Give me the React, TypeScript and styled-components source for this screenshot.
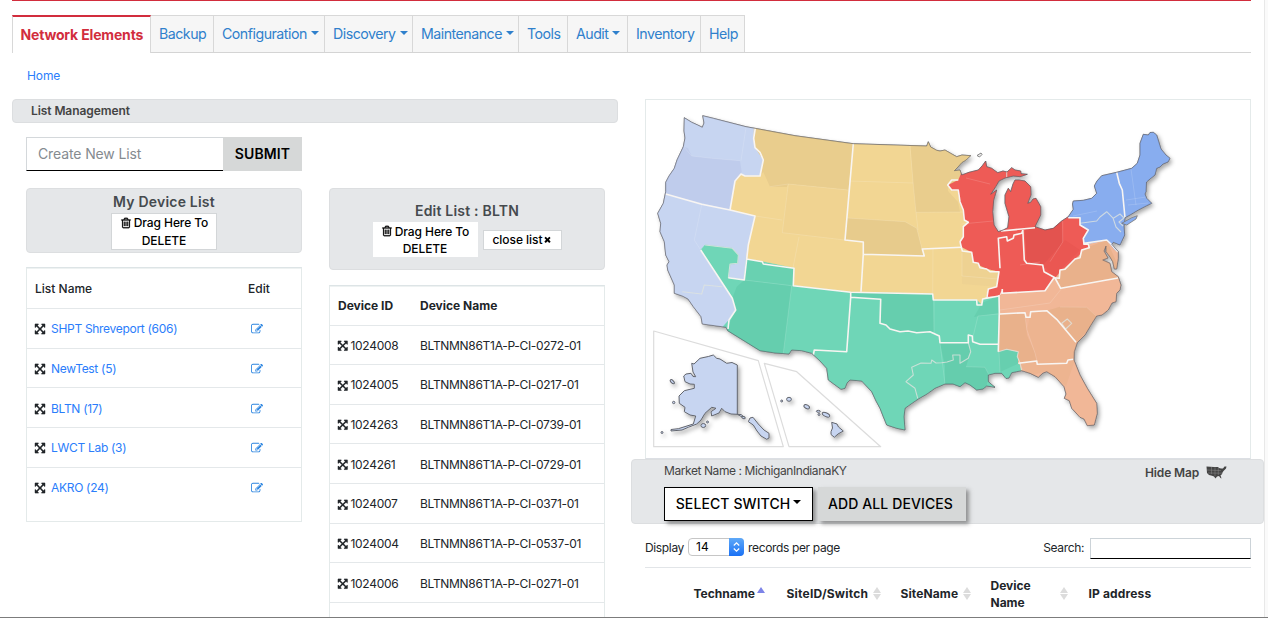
import React from "react";
import styled, { createGlobalStyle, css } from "styled-components";

const Global = createGlobalStyle`
  * { box-sizing: border-box; }
  html, body { margin: 0; padding: 0; background: #fff; overflow: hidden; }
  body { font-family: Inter, "Liberation Sans", sans-serif; font-size: 13px; color: #212529; line-height: 16px; }
  button, input { font-family: inherit; margin: 0; border-radius: 0; }
`;

/* ---------- icons ---------- */

const PATHS = {
  move: "M1411 541l-355 355 355 355 144-144q29-31 70-14 39 17 39 59v448q0 26-19 45t-45 19h-448q-42 0-59-40-17-39 14-69l144-144-355-355-355 355 144 144q31 30 14 69-17 40-59 40h-448q-26 0-45-19t-19-45v-448q0-42 40-59 39-17 69 14l144 144 355-355-355-355-144 144q-19 19-45 19-12 0-24-5-40-17-40-59v-448q0-26 19-45t45-19h448q42 0 59 40 17 39-14 69l-144 144 355 355 355-355-144-144q-31-30-14-69 17-40 59-40h448q26 0 45 19t19 45v448q0 42-39 59-13 5-25 5-26 0-45-19z",
  edit: "M888 1184l116-116-152-152-116 116v56h96v96h56zm440-720q-16-16-33 1l-350 350q-17 17-1 33t33-1l350-350q17-17 1-33zm80 594v190q0 119-84.5 203.5t-203.5 84.5h-832q-119 0-203.5-84.5t-84.5-203.5v-832q0-119 84.5-203.5t203.5-84.5h832q63 0 117 25 15 7 18 23 3 17-9 29l-49 49q-14 14-32 8-23-6-45-6h-832q-66 0-113 47t-47 113v832q0 66 47 113t113 47h832q66 0 113-47t47-113v-126q0-13 9-22l64-64q15-15 35-7t20 29zm-96-738l288 288-672 672h-288v-288zm444 132l-92 92-288-288 92-92q28-28 68-28t68 28l152 152q28 28 28 68t-28 68z",
  trash: "M704 736v576q0 14-9 23t-23 9h-64q-14 0-23-9t-9-23v-576q0-14 9-23t23-9h64q14 0 23 9t9 23zm256 0v576q0 14-9 23t-23 9h-64q-14 0-23-9t-9-23v-576q0-14 9-23t23-9h64q14 0 23 9t9 23zm256 0v576q0 14-9 23t-23 9h-64q-14 0-23-9t-9-23v-576q0-14 9-23t23-9h64q14 0 23 9t9 23zm128 724v-948h-896v948q0 22 7 40.5t14.5 27 10.5 8.5h832q3 0 10.5-8.5t14.5-27 7-40.5zm-672-1076h448l-48-117q-7-9-17-11h-317q-10 2-17 11zm928 32v64q0 14-9 23t-23 9h-96v948q0 83-47 143.5t-113 60.5h-832q-66 0-113-58.5t-47-141.5v-952h-96q-14 0-23-9t-9-23v-64q0-14 9-23t23-9h309l70-167q15-37 54-63t79-26h320q40 0 79 26t54 63l70 167h309q14 0 23 9t9 23z",
  times: "M1490 1322q0 40-28 68l-136 136q-28 28-68 28t-68-28l-294-294-294 294q-28 28-68 28t-68-28l-136-136q-28-28-28-68t28-68l294-294-294-294q-28-28-28-68t28-68l136-136q28-28 68-28t68 28l294 294 294-294q28-28 68-28t68 28l136 136q28 28 28 68t-28 68l-294 294 294 294q28 28 28 68z",
};

const Svg = styled.svg`
  display: inline-block;
  flex: none;
  fill: currentColor;
`;

function Icon({ name, size, weight = 0 }: { name: keyof typeof PATHS; size: number; weight?: number }) {
  return (
    <Svg width={size} height={size} viewBox="0 0 1792 1792" stroke="currentColor" strokeWidth={weight}>
      <path d={PATHS[name]} />
    </Svg>
  );
}

const Caret = styled.i<{ $gap?: number }>`
  display: inline-block;
  flex: none;
  margin: 0 0 2px ${(p) => p.$gap ?? 4}px;
  border: 4px solid transparent;
  border-top-color: currentColor;
  border-bottom: 0;
`;

/* ---------- page frame ---------- */

const Page = styled.div`
  width: 1268px;
  height: 618px;
  display: flex;
  border-bottom: 1px solid #7c7c7c;
  overflow: hidden;
`;

const Content = styled.div`
  width: 1264px;
  flex: none;
  padding-left: 12px;
`;

const Gutter = styled.div`
  flex: 1;
  background: #fafafa;
  border-left: 1px solid #e8e8e8;
`;

const TopRule = styled.div`
  width: 1239px;
  height: 1px;
  background: #d22d3d;
`;

const Tabs = styled.nav`
  width: 1239px;
  height: 38px;
  margin-top: 14px;
  display: flex;
  border-bottom: 1px solid #d4d4d4;
`;

const Tab = styled.a<{ $w: number; $active?: boolean }>`
  width: ${(p) => p.$w}px;
  height: 37px;
  flex: none;
  display: flex;
  align-items: center;
  padding: 0 0 1px 8px;
  font-size: 14px;
  letter-spacing: -0.5px;
  font-size: 14.2px;
  white-space: nowrap;
  color: #2f80cc;
  background: #f6f6f6;
  border: 1px solid #d8d8d8;
  border-left-width: 0;
  border-bottom: 0;
  ${(p) =>
    p.$active &&
    css`
      height: 38px;
      background: #fff;
      color: #d22d3d;
      font-size: 14px;
      font-weight: 700;
      letter-spacing: -0.17px;
      padding-left: 7.5px;
      border-top: 2px solid #d22d3d;
      border-left-width: 1px;
      border-right-width: 1px;
    `}
`;

const Crumb = styled.a`
  display: block;
  margin: 15px 0 15px 15px;
  font-size: 12px;
  line-height: 16px;
  letter-spacing: -0.1px;
  color: #2a7dfb;
`;

const Columns = styled.main`
  display: flex;
  justify-content: space-between;
  align-items: flex-start;
`;

const panel = css`
  background: #e5e7e9;
  border: 1px solid #dcdee0;
  border-radius: 4px;
`;

/* ---------- list management ---------- */

const ListArea = styled.section`
  width: 606px;
`;

const SectionTitle = styled.h2`
  ${panel}
  height: 24px;
  margin: 0;
  padding-left: 18px;
  font-size: 12px;
  line-height: 22px;
  font-weight: 600;
  letter-spacing: -0.08px;
  color: #444;
`;

const ListColumns = styled.div`
  display: flex;
  gap: 27px;
  padding: 14px 0 0 14px;
`;

const Column = styled.div<{ $top?: number }>`
  width: 276px;
  padding-top: ${(p) => p.$top ?? 0}px;
`;

const CreateForm = styled.form`
  display: flex;
  height: 34px;
`;

const NameInput = styled.input`
  width: 197px;
  padding: 0 0 2px 11px;
  border: 1px solid #d4d8db;
  border-right: 0;
  border-bottom-color: #000;
  font-size: 14px;
  letter-spacing: -0.12px;
  outline: 0;
  &::placeholder { color: #858b90; opacity: 1; }
`;

const SubmitButton = styled.button`
  flex: 1;
  height: 34px;
  border: 0;
  padding: 0 0 1px;
  background: #d6d8d8;
  font-size: 14px;
  font-weight: 600;
  letter-spacing: 0.1px;
  color: #000;
`;

const ToolPanel = styled.div<{ $h: number; $pad: number }>`
  ${panel}
  height: ${(p) => p.$h}px;
  padding-top: ${(p) => p.$pad}px;
  display: flex;
  flex-direction: column;
  align-items: center;
`;

const PanelTitle = styled.h3`
  margin: -1px 0 1px;
  font-size: 14px;
  line-height: 20px;
  font-weight: 600;
  letter-spacing: 0.2px;
  color: #454a4e;
`;

const ButtonRow = styled.div`
  display: flex;
  align-items: center;
  gap: 5px;
`;

const DropButton = styled.button<{ $h: number; $line: number; $bordered?: boolean }>`
  width: ${(p) => (p.$bordered ? 106 : 105)}px;
  height: ${(p) => p.$h}px;
  padding: 0;
  background: #fff;
  border: ${(p) => (p.$bordered ? "1px solid #d3d6d8" : "0")};
  display: flex;
  flex-direction: column;
  align-items: center;
  justify-content: center;
  font-size: 12px;
  font-weight: 500;
  letter-spacing: -0.08px;
  line-height: ${(p) => p.$line}px;
  color: #000;
`;

const IconLine = styled.span`
  display: flex;
  align-items: center;
  gap: 2px;
`;

const CloseButton = styled.button`
  width: 79px;
  height: 20px;
  padding: 0;
  display: flex;
  align-items: center;
  justify-content: center;
  background: #fff;
  border: 1px solid #d3d6d8;
  font-size: 12px;
  font-weight: 500;
  letter-spacing: -0.05px;
  line-height: 16px;
  color: #000;
`;

const Grid = styled.div<{ $h: number; $gap: number }>`
  margin-top: ${(p) => p.$gap}px;
  height: ${(p) => p.$h}px;
  border: 1px solid #e4eaea;
  border-top-color: #dde4e6;
  box-shadow: inset 0 1px 0 #eef2f2;
`;

const GridRow = styled.div<{ $cols: string; $h?: number; $weight?: number; $last?: boolean }>`
  display: grid;
  grid-template-columns: ${(p) => p.$cols};
  align-items: center;
  height: ${(p) => p.$h ?? 39.67}px;
  padding: 2px 0 0 7px;
  border-bottom: ${(p) => (p.$last ? 0 : 1)}px solid #e4e8ea;
  font-size: 12px;
  font-weight: ${(p) => p.$weight ?? 400};
  letter-spacing: ${(p) => (p.$weight ? 0 : -0.3)}px;
  white-space: nowrap;
`;

const Cell = styled.span<{ $gap?: number; $pad?: number }>`
  display: flex;
  align-items: center;
  gap: ${(p) => p.$gap ?? 0}px;
  padding-left: ${(p) => p.$pad ?? 0}px;
`;

const ListLink = styled.a`
  color: #2a7dfb;
`;

const EditLink = styled.a`
  display: flex;
  padding-left: 3px;
  color: #2b84e0;
`;

/* ---------- map side ---------- */

const MapArea = styled.section`
  width: 633px;
`;

const MapFrame = styled.div`
  width: 606px;
  height: 360px;
  margin-left: 14px;
  border: 1px solid #e4eaea;
  border-bottom-color: #dcdfe4;
  svg { display: block; margin: -1px; }
`;

const MarketPanel = styled.div`
  ${panel}
  height: 65px;
  padding: 3px 36px 0 32px;
`;

const MarketHead = styled.div`
  display: flex;
  justify-content: space-between;
  height: 24px;
  font-size: 12px;
  line-height: 15px;
  letter-spacing: -0.42px;
  color: #444;
`;

const HideMap = styled.a`
  display: flex;
  align-items: center;
  gap: 7px;
  height: 18px;
  font-weight: 600;
  letter-spacing: -0.15px;
`;

const MarketActions = styled.div`
  display: flex;
  gap: 5px;
`;

const ActionButton = styled.button<{ $w: number; $primary?: boolean }>`
  width: ${(p) => p.$w}px;
  height: 34px;
  padding: 0 ${(p) => (p.$primary ? 0 : 3)}px 2px 0;
  display: flex;
  align-items: center;
  justify-content: center;
  font-size: 14px;
  font-weight: 500;
  letter-spacing: 0.1px;
  white-space: nowrap;
  color: #000;
  background: ${(p) => (p.$primary ? "#fff" : "#d6d8d8")};
  border: ${(p) => (p.$primary ? "1px solid #000" : "0")};
  box-shadow: 3px 3px 4px rgba(60, 60, 60, 0.5);
`;

const Controls = styled.div`
  display: flex;
  justify-content: space-between;
  width: 606px;
  height: 44px;
  margin-left: 14px;
  padding-top: 14px;
  border-bottom: 1px solid #e2e5e8;
  font-size: 12px;
  letter-spacing: -0.35px;
`;

const Control = styled.label<{ $gap: number }>`
  display: flex;
  align-items: center;
  gap: ${(p) => p.$gap}px;
  height: 20px;
`;

const Select = styled.span`
  width: 56px;
  height: 18px;
  display: flex;
  align-items: center;
  justify-content: space-between;
  padding-left: 7px;
  letter-spacing: 0;
  border: 1px solid #c6c6c6;
  border-radius: 4px;
  color: #000;
  margin: -1px 0 1px;
`;

const Stepper = styled.span`
  width: 15px;
  height: 18px;
  margin-right: -1px;
  display: flex;
  align-items: center;
  justify-content: center;
  border-radius: 0 4px 4px 0;
  background: linear-gradient(#5fa9f8, #1a71f5);
`;

const SearchInput = styled.input`
  width: 161px;
  height: 21px;
  border: 1px solid #ccd3d8;
  border-bottom-color: #000;
  outline: 0;
`;

const TableHead = styled.div`
  display: grid;
  grid-template-columns: 93px 114px 90px 98px 1fr;
  align-items: center;
  width: 606px;
  height: 51px;
  margin-left: 14px;
  padding-left: 48.5px;
  font-size: 12px;
  font-weight: 700;
  line-height: 17px;
  letter-spacing: 0.08px;
`;

const HeadCell = styled.span<{ $right?: number; $track?: number }>`
  display: flex;
  align-items: center;
  justify-content: space-between;
  padding-right: ${(p) => p.$right ?? 0}px;
  letter-spacing: ${(p) => p.$track ?? 0}px;
`;

const Up = styled.i<{ $on?: boolean }>`
  width: 0;
  border: 4px solid transparent;
  border-top: 0;
  border-bottom: ${(p) => (p.$on ? "6px solid #7d84e8" : "6px solid #dcdcdc")};
`;

const Down = styled.i`
  width: 0;
  border: 4px solid transparent;
  border-bottom: 0;
  border-top: 6px solid #dcdcdc;
`;

const SortBox = styled.span<{ $on?: boolean }>`
  display: flex;
  flex-direction: column;
  gap: 1px;
  padding-bottom: ${(p) => (p.$on ? 7 : 0)}px;
`;

function Sort({ on }: { on?: boolean }) {
  return (
    <SortBox $on={on}>
      <Up $on={on} />
      {!on && <Down />}
    </SortBox>
  );
}

/* ---------- market map ---------- */

const COUNTRY =
  "M684.3 117.7L691.7 122.3 697.7 125 702.3 127.3 704 123 702.7 115.7 713.3 118.3 746 126.7 755 128.3 795 135.7 853.3 143.7 926.7 146 928.3 141.7 930.7 147 936.7 150.3 940 151 945 150 951 153.5 956.7 156.7 962 155 970.7 155.7 966 160 961.7 162.7 958 167 954.3 170.7 960 170 961.7 175 969 172.3 978.3 170 982.3 165.7 985.7 161 986.7 166.7 991.7 168.3 997.7 172.7 1003 171 1007 172 1011.7 167.7 1015 170 1020.7 171 1021 173.7 1027.3 174.3 1020 176.7 1013.3 176 1005 178 999 181 995.7 186.7 990.7 194.3 996.7 190 993.7 200 992.7 211.7 994 225 998.3 231.7 1003.3 230 1007.7 227.7 1009 216.7 1005 203.3 1005 195 1008.3 188.3 1010.7 191.7 1013 184 1015 180 1019 180 1025 181 1030.7 186.7 1031 195 1027.7 203.3 1030.7 202.3 1033 199 1036 198.3 1040.7 206.7 1040.7 215 1035 226.7 1045 230 1053.3 228.3 1061.7 221 1068.3 216.7 1073.3 209.3 1072.5 204 1073.3 201 1083.3 200.3 1091.7 198.3 1096.7 193.3 1094.3 186 1097 181 1101.7 175.7 1116.7 172.3 1131.7 168.3 1137.3 163.3 1140 155 1140 143.3 1143.3 134.3 1148.3 135 1150 132.5 1153.3 132.3 1156.7 135 1161 149 1166 155 1170 158.3 1168 162 1163 164 1160 167 1156.7 168.3 1155 175 1150 179 1146.5 182 1146 191.7 1145 194 1146.7 198.3 1151.7 203.3 1146.7 205.7 1138.3 210 1130 215 1125 217.7 1124 226.7 1124.7 235 1120 245 1113.3 242.3 1111.7 244.3 1118.3 251.7 1118.3 258.3 1116.7 269 1114.3 269 1112.7 261.7 1110 257 1106 251.7 1106 246 1104 251 1108 258 1102.7 260 1110 263.3 1111.7 271.7 1118.3 276.7 1121 285 1120 290 1116.7 293.3 1116 301.7 1112 303 1108.3 310 1102 315 1096.7 316 1092 323.3 1085 335 1077.3 342.7 1074.3 351.7 1074 360 1080 375 1087.3 388.3 1096.7 403.3 1097.3 413.3 1094.3 425 1087.3 425.7 1084 419 1080 417.3 1071.7 408.3 1069.3 400.7 1064.3 398.3 1066 394 1064 386.7 1055 376.7 1046.7 371.7 1043 373 1038.3 377.3 1030 373.3 1021.7 370.7 1011.7 372.7 1009 378 1006 378.5 1001.7 373.3 995 373.3 988.3 375 988.3 381.7 995 387.3 986.7 386 983 389 976.7 390 970 385 965 382.7 960 386.7 953 384 945 384 935 388.3 927 394 918.3 399 911 404 905 408.3 904 416.7 905 430 896.7 428.3 886.7 425 883 416 880 408.3 876 401 871.7 391.7 861.7 381 850 380 847 383 845 388.3 841 389.3 828.3 380 826.7 368.3 820 361 811.7 353.3 801.7 350.7 791.7 350 789 354 775 353 760 350.7 727.7 330.7 726 327.3 702.3 324 701 316.7 693.3 306.7 688 299 682.3 296 674.3 293.3 674.3 285 667.7 270 667 265 669 261.7 665.7 255 664.3 241.7 660 231.7 660.7 223.3 657.7 213.3 663.3 203.3 665.7 191.7 665.7 182.3 669 176 674.3 168.3 677 160 683.3 146.7 685 138 684 131Z";

const REGIONS: [string, string][] = [
  ["#c7d5f1", "M640 100L755.3 100 755.3 128.3 753.7 138.3 755 147.7 760 152.3 763.3 160 760 176 745 176 741 174 735 181 730 210 755 216 748.3 245 744.3 280 728.3 277.7 730 264 737.7 263.3 738.3 255 732.3 248.3 705 245 700.7 250 732.3 298.3 735.7 310 729 320 726 335 640 340Z"],
  ["#f2d693", "M755.3 110L990 110 985 158 962 171 958.3 180 951.7 180 947.7 185 951.7 190 958.3 190 960 201.7 963.3 210 964.3 220 968.3 222.3 963.3 226.7 963.3 236.7 960 241.7 962.3 251 971.7 252.3 973.3 262.3 978.3 263.3 980 267.7 986.7 269 999 271.7 996.7 286.7 988.3 289 986.7 296.7 982.7 299 981.7 305 977 304 976.7 300 933.3 300 932.7 294 850.7 292.3 793.3 285.7 794 268.3 762.3 261.7 746.3 259 748.3 245 755 216 730 210 735 181 741 174 745 176 760 176 763.3 160 760 152.3 755 147.7 753.7 138.3Z"],
  ["#6fd6b7", "M705 245L732.3 248.3 738.3 255 737.7 263.3 730 264 728.3 277.7 744.3 280 746.3 259 762.3 261.7 794 268.3 793.3 285.7 850.7 292.3 932.7 294 933.3 300 976.7 300 981.7 305 982.7 299 999 296 999.3 313 998.3 351.7 1006.7 349.3 1018.3 351.7 1017.3 356.7 1020 362.7 1022 375 1000 440 740 440 720 330 729 320 735.7 310 732.3 298.3 700.7 250Z"],
  ["#ee5b56", "M962 171L975 165 990 155 1045 165 1045 226 1070 210 1068.3 217.7 1080 217.7 1080 225 1088.3 230 1083.3 238.3 1084 244.3 1088.3 244.3 1089.3 247.7 1081.7 250 1080 257.7 1075 259 1065 269.3 1060 270 1059.3 278.3 1054 277.7 1045 290.7 1002.3 293.3 1002 289 999 296 986.7 296.7 988.3 289 996.7 286.7 999 271.7 986.7 269 980 267.7 978.3 263.3 973.3 262.3 971.7 252.3 962.3 251 960 241.7 963.3 236.7 963.3 226.7 968.3 222.3 964.3 220 963.3 210 960 201.7 958.3 190 951.7 190 947.7 185 951.7 180 958.3 180Z"],
  ["#f1b797", "M999 296L1002.3 293.3 1045 290.7 1054 277.7 1059.3 278.3 1060 270 1065 269.3 1075 259 1080 257.7 1081.7 250 1089.3 247.7 1088.3 244.3 1106.7 240 1110 243.3 1115 250 1130 252 1130 300 1100 440 1022 375 1020 362.7 1017.3 356.7 1018.3 351.7 1006.7 349.3 998.3 351.7 999.3 313Z"],
  ["#88adef", "M1068.3 217.7L1073 190 1140 125 1180 125 1180 200 1125 252 1115 250 1106.7 240 1084 244.3 1083.3 238.3 1088.3 230 1080 225 1080 217.7Z"],
];

const TINTS: [string, string][] = [
  ["#bfccec", "M683.3 146.7L688 148 691.7 156 711.7 158.3 740 160.7 741.7 171.7 735 181 730 210 665.7 194 660 180Z"],
  ["#e9cd8d", "M755.3 128.3L853.3 143.7 848.3 190 788.3 184 786.7 187 770 186.7 763.3 172 760 176 763.3 160 755 147.7 753.7 138.3Z"],
  ["#f0d391", "M788.3 184L848.3 190 845 240 782.3 232.7Z"],
  ["#e9cd8d", "M910 140L932 140 975 155 953 170 962 171 958 180 948 185 948 191 958 202 960 212 916 212.3 913.3 185Z"],
  ["#e7cb8c", "M846.7 218L905 221.7 916.7 228.3 921.7 248.3 924.3 256 863.3 254.3 863.3 242 845 240Z"],
  ["#eed292", "M961.7 247.3L971.7 252.3 973.3 262.3 986.7 269 999 271.7 996.7 286.7 962 284Z"],
  ["#65ceae", "M744.3 280L791.7 285.7 783.3 353.3 760 352 726 331 735.7 310 732.3 298.3 736.7 286.7Z"],
  ["#69d1b1", "M746.3 259L794 268.3 793.3 285.7 744.3 280Z"],
  ["#66ceae", "M850.7 292.3L932.7 294 934 333 916.7 332.7 900 331.7 880 323.3 880.7 299.3 850.7 297.3Z"],
  ["#67cfaf", "M982 303L998.8 296 998.8 313 974 317Z"],
  ["#65cdad", "M940 343L968.3 342.7 970.7 351.7 966 366.7 985 367.3 989 375 985 392 945 390 945 366Z"],
  ["#67cfaf", "M999 351L1006.7 349.3 1018.3 351.7 1017.3 356.7 1020 362.7 1000 372Z"],
  ["#e3534f", "M1024.7 228.3L1035 227.7 1045 230 1061.7 221 1062.7 241.7 1050 261.7 1042.7 265 1026.7 263.3Z"],
  ["#ea5752", "M1043 265L1065 240 1080 250 1060 270 1055 278Z"],
  ["#e9b18b", "M1088.3 247L1106.7 240 1120 270 1118 278 1060.7 288.3 1055 278 1062 270 1076 258Z"],
  ["#e9b18b", "M1000 314L1025 314 1027 335 1035 353 1036.7 361 1018 363 1018 351.7 1006.7 349.3 998.3 351.7Z"],
  ["#e9b18b", "M1046.7 310.7L1060 306.7 1086.7 307.3 1096.7 316 1092 325 1077 342.7 1056.7 319.3Z"],
  ["#edb490", "M1018 363L1075 360 1066 386 1046 371 1030 376Z"],
  ["#edb490", "M1030.7 312L1046.7 310.7 1056.7 319.3 1076 342.7 1074 360 1037 363 1035 353 1027 330Z"],
];

const FAINT = [
  "M746 127.3L741 160.7M684 147L691.7 156 711.7 158.3 740 160.7",
  "M701.7 205L694.3 240 700.7 250",
  "M770 186.7L788.3 184 848.3 190M788.3 184L782.3 232.7 845 240M755 216L782 220M799 237L793 268M910 146L913.3 185 916 212.3 918 230M849 181L913.3 183M847 218L905 221.7 916.7 228.3 922 249M916 212.3L962 212M933 249L932.7 294M962 253V276L998 279",
  "M791.7 285.7L783.3 353.3M744.3 280L791.7 285.7M934 301V333M940 343L945 384M978 316L998 314M978 316L972 341M966 366.7L985 367.3 989 375M999 352L1000 372",
  "M961.7 224L993 221M1062.7 221V242L1050 261.7M1020 265L1040 262M966 178L990 184",
  "M1025 317L1027 330 1035 353 1037 361M1060 307L1086.7 307.3 1096 316M1000 310L1050 303 1062 288",
  "M1131 169L1136 205M1126 200L1146 197M1073 216L1097 211M1128 205L1148 203",
];

const BORDERS = [
  "M755.3 128.3L753.7 138.3 755 147.7 760 152.3 763.3 160 760 176 745 176 741 174 735 181 730 210",
  "M665.7 194L701.7 204.3 730 210 755 216 748.3 245 744.3 280 728.3 277.7 M700.7 250L732.3 298.3 735.7 310 729 320 728 329",
  "M746.3 259L762.3 261.7 763.3 264 794 268.3 793.3 285.7 850.7 292.3 932.7 294 933.3 300 976.7 300 977 305 981.7 305 982.7 299 999 296",
  "M853.3 143.7L845 240 863.3 242 863.3 254.3 924.3 256 922.3 249 961.7 247.3M863.3 254.3L861 291.7",
  "M958.3 180L951.7 180 947.7 185 951.7 190 958.3 190 960 201.7 963.3 210 964.3 220 968.3 222.3 963.3 226.7 963.3 236.7 960 241.7 962.3 251 971.7 252.3 973.3 262.3 978.3 263.3 980 267.7 986.7 269 990 271.7 999 271.7 996.7 286.7 988.3 289 987 297",
  "M850.7 292.3L850.7 297.3 846.7 351.7 814.3 350 813.3 355M850.7 297.3L880.7 299.3 880 323.3 886 325 890 329 900 331.7 908 331 916.7 332.7 930 331.7 939.3 336 940 342.7 968.3 342.7 968.3 335 972.3 336 972.7 341.7 980 344.3 998.3 344.3",
  "M999 295L999.3 313 998.3 351.7",
  "M1000 268.3L998.3 238.3 1006.7 236.7 1007.3 241 1013.3 238.3 1014 235 1021.7 233.3 1023.3 229M1001 231L1035 227.7M1022.7 228.3L1024.3 260 1026.7 263.3 1042.7 265 1044 271.7 1055 277.7",
  "M1002.3 289V293.3L1045 290.7 1054 277.7 1059.3 278.3 1060 270 1065 269.3 1075 259 1080 257.7 1081.7 250 1089.3 247.7 1088.3 244.3 1084 244.3 1083.3 238.3 1088.3 230 1080 225 1080 217.7 1068.3 217.7M1084 243.3L1106.7 240 1111 244 1118 252",
  "M1055 278L1060.7 288.3 1118 278M1000 314L1025 312.7 1026 317.3H1030L1030.7 311.7 1046.7 310.7 1056.7 319.3 1076 342.3M1018.3 363.3L1036.7 361 1037.3 364.3 1066.7 363.3 1068 360 1073.3 359.3",
  "M1116.7 172.3L1119.3 183.3 1122.3 190 1125 217.7",
];

const SUB_BORDERS =
  "M705 245L732.3 248.3 738.3 255 737.7 263.3 730 264 728.3 277.7M682.3 291.7L701.7 294 704.3 285 722.3 286.7M1006.7 171V177M968.3 342.7L970.7 351.7 968.3 358.3 960 363.3 960 355 952.7 355 953.3 360 947 362 941.7 362.7 936 363 931.7 360 931 363.3 921 363 911.7 367.3 913.3 375 906 381.7 915 388.3 917.7 398.3M1080 223.3L1096.7 221 1100 217 1106.7 211.7 1113.3 218.3 1120 214 1124 218 1119 222 1123 226M1113 218L1116 227 1121 232M1061.7 323.3L1067.3 319 1071.7 323.3 1065.7 329ZM998.3 351.7L1006.7 349.3 1018.3 351.7 1017.3 356.7 1020 362.7 1021.7 370";

const ALASKA =
  "M713.3 355L716.7 358.3 720 359 726.7 363.3 732 362.5 737.3 365 737.3 414.3 731 414 725 411.7 721.7 408.3 719 413 711.7 416 711 411.7 716 408.3 711.7 407.3 705 413.3 701 420 696.7 424 688.3 427.3 682 430 671 431 671 429.5 678.3 428.7 693.3 424 695.7 416 690 415 684.3 411.7 685 407.3 679.3 403.3 679 396 684.3 390.7 694.3 388.3 694.3 384.3 690 384 685 381.7 683.7 376 686 374 691 373.3 693 376.5 695.7 376.7 693 372 691.7 363.3 694 364 700 358.3 708.3 356.5Z";

const PANHANDLE =
  "M737.3 414.3L741 414.5 745 417.7 742 417ZM750 418L753 417.3 758.3 424 764 430 769 433.3 769 438 766.7 439.3 761 436 757 431 753.3 425 748.3 421.7Z";

const HAWAII = "M831.7 422.3L837 424 838.5 427 843.3 431 838 434 834.3 437.3 831 434.5 831 431.7 832.5 428Z";

const ISLETS: [number, number, number, number, number][] = [
  [672.3, 381.7, 2.6, 1.3, 45],
  [673.7, 402.5, 1.2, 1.2, 0],
  [662, 432.5, 1, 1, 0],
  [703.3, 425.5, 2.4, 2, 0],
  [707.5, 422, 1, 1, 0],
  [743.5, 417.5, 1.8, 1, 20],
  [781.7, 401, 1, 1, 0],
  [789, 399.3, 2.4, 2, 0],
  [806.7, 406.7, 3, 1.8, 30],
  [818.3, 411.3, 2, 1, 0],
  [819, 414.5, 1, 1, 0],
  [826, 414.7, 4, 1.8, 25],
];

function MarketMap() {
  return (
    <svg width="606" height="360" viewBox="645 99 606 360" strokeLinejoin="round">
      <defs>
        <clipPath id="country">
          <path d={COUNTRY} />
        </clipPath>
        <filter id="shade" x="-5%" y="-5%" width="112%" height="112%">
          <feDropShadow dx="2" dy="2.5" stdDeviation="2" floodColor="#000" floodOpacity="0.35" />
        </filter>
      </defs>
      <g fill="none" stroke="#dcdcdc" strokeWidth="1.2">
        <path d="M653.7 331L758.3 360.7 783.3 446.7 653.7 446.7Z" />
        <path d="M764.3 363.3L796.7 371.7 880.7 446.7 789 446.7Z" />
      </g>
      <path d={COUNTRY} fill="#fff" stroke="#666" strokeWidth="0.6" filter="url(#shade)" />
      <g clipPath="url(#country)">
        {REGIONS.map(([fill, d]) => (
          <path key={fill} d={d} fill={fill} stroke={fill} strokeWidth="0.5" />
        ))}
        {TINTS.map(([fill, d]) => (
          <path key={d} d={d} fill={fill} />
        ))}
        <g fill="none" stroke="#fff" strokeOpacity="0.15" strokeWidth="1">
          {FAINT.map((d) => (
            <path key={d} d={d} />
          ))}
        </g>
        <path d={SUB_BORDERS} fill="none" stroke="#dfe3df" strokeOpacity="0.8" strokeWidth="1.1" />
        <g fill="none" stroke="#f8f5f2" strokeWidth="1.6">
          {BORDERS.map((d) => (
            <path key={d} d={d} />
          ))}
        </g>
      </g>
      <path d={COUNTRY} fill="none" stroke="#4f4f58" strokeOpacity="0.65" strokeWidth="0.8" />
      <path d="M1121.7 223.3L1131.7 217.7 1137.3 215.7 1136 219 1126.7 225Z" fill="#88adef" stroke="#777" strokeWidth="0.8" />
      <path d="M977 155.5L981 153 982 154.5 979.5 157Z" fill="#eee" stroke="#777" strokeWidth="0.9" />
      <g fill="#c7d5f1" stroke="#62656d" strokeWidth="1" filter="url(#shade)">
        <path d={ALASKA} />
        <path d={PANHANDLE} />
        <path d={HAWAII} />
        {ISLETS.map(([x, y, rx, ry, r]) => (
          <ellipse key={`${x}-${y}`} cx={x} cy={y} rx={rx} ry={ry} transform={`rotate(${r} ${x} ${y})`} />
        ))}
      </g>
    </svg>
  );
}

function MiniMap() {
  return (
    <svg width="21" height="20" viewBox="0 0 21 20">
      <path d="M0.5 4.5L8 5 12 4.9 13 6 15 6.4 17 6.4 18.5 4.6 20.5 4.4 20 6.6 17.5 9 16.5 10.5 16 12.2 14.5 13.2 15.5 16.5 14.5 16 13 14 11 14.5 9.5 16.5 8 14.5 6 13.8 3 13 1 11Z" fill="#444" />
      <path d="M5.5 5V12M9 5.3V14M12.3 6V13M1 8L15 8.6M2 11L16 11.2" stroke="#8a8a8a" strokeWidth="0.5" fill="none" />
    </svg>
  );
}

/* ---------- data ---------- */

const TABS: { label: string; w: number; menu?: boolean; active?: boolean }[] = [
  { label: "Network Elements", w: 139, active: true },
  { label: "Backup", w: 63 },
  { label: "Configuration", w: 111, menu: true },
  { label: "Discovery", w: 88, menu: true },
  { label: "Maintenance", w: 106, menu: true },
  { label: "Tools", w: 49 },
  { label: "Audit", w: 60, menu: true },
  { label: "Inventory", w: 73 },
  { label: "Help", w: 44 },
];

const LISTS = ["SHPT Shreveport (606)", "NewTest (5)", "BLTN (17)", "LWCT Lab (3)", "AKRO (24)"];

const DEVICES = [
  ["1024008", "BLTNMN86T1A-P-CI-0272-01"],
  ["1024005", "BLTNMN86T1A-P-CI-0217-01"],
  ["1024263", "BLTNMN86T1A-P-CI-0739-01"],
  ["1024261", "BLTNMN86T1A-P-CI-0729-01"],
  ["1024007", "BLTNMN86T1A-P-CI-0371-01"],
  ["1024004", "BLTNMN86T1A-P-CI-0537-01"],
  ["1024006", "BLTNMN86T1A-P-CI-0271-01"],
];

function DropZone({ h, line, bordered }: { h: number; line: number; bordered?: boolean }) {
  return (
    <DropButton $h={h} $line={line} $bordered={bordered}>
      <IconLine>
        <Icon name="trash" size={12} weight={40} />
        Drag Here To
      </IconLine>
      <span>DELETE</span>
    </DropButton>
  );
}

export default function App() {
  return (
    <>
      <Global />
      <Page>
        <Content>
          <TopRule />
          <Tabs>
            {TABS.map((t) => (
              <Tab key={t.label} $w={t.w} $active={t.active}>
                {t.label}
                {t.menu && <Caret />}
              </Tab>
            ))}
          </Tabs>
          <Crumb>Home</Crumb>
          <Columns>
            <ListArea>
              <SectionTitle>List Management</SectionTitle>
              <ListColumns>
                <Column>
                  <CreateForm>
                    <NameInput placeholder="Create New List" />
                    <SubmitButton type="button">SUBMIT</SubmitButton>
                  </CreateForm>
                  <Column $top={17}>
                    <ToolPanel $h={65} $pad={4}>
                      <PanelTitle>My Device List</PanelTitle>
                      <DropZone h={37} line={18} bordered />
                    </ToolPanel>
                  </Column>
                  <Grid $h={255} $gap={14}>
                    <GridRow $cols="214px 1fr" $h={41} $weight={500}>
                      <Cell $pad={1}>List Name</Cell>
                      <Cell>Edit</Cell>
                    </GridRow>
                    {LISTS.map((name, i) => (
                      <GridRow key={name} $cols="214px 1fr" $last={i === LISTS.length - 1}>
                        <Cell $gap={5}>
                          <Icon name="move" size={12} weight={20} />
                          <ListLink>{name}</ListLink>
                        </Cell>
                        <EditLink>
                          <Icon name="edit" size={12} />
                        </EditLink>
                      </GridRow>
                    ))}
                  </Grid>
                </Column>
                <Column $top={51}>
                  <ToolPanel $h={82} $pad={13}>
                    <PanelTitle>Edit List : BLTN</PanelTitle>
                    <ButtonRow>
                      <DropZone h={35} line={17} />
                      <CloseButton>
                        close list
                        <Icon name="times" size={9} />
                      </CloseButton>
                    </ButtonRow>
                  </ToolPanel>
                  <Grid $h={340} $gap={15}>
                    <GridRow $cols="83px 1fr" $h={39.5} $weight={700}>
                      <Cell $pad={1}>Device ID</Cell>
                      <Cell>Device Name</Cell>
                    </GridRow>
                    {DEVICES.map(([id, name]) => (
                      <GridRow key={id} $cols="83px 1fr">
                        <Cell $gap={2}>
                          <Icon name="move" size={11.5} weight={20} />
                          {id}
                        </Cell>
                        <Cell>{name}</Cell>
                      </GridRow>
                    ))}
                  </Grid>
                </Column>
              </ListColumns>
            </ListArea>
            <MapArea>
              <MapFrame>
                <MarketMap />
              </MapFrame>
              <MarketPanel>
                <MarketHead>
                  <span>Market Name : MichiganIndianaKY</span>
                  <HideMap>
                    Hide Map
                    <MiniMap />
                  </HideMap>
                </MarketHead>
                <MarketActions>
                  <ActionButton $w={149} $primary>
                    SELECT SWITCH
                    <Caret $gap={3} />
                  </ActionButton>
                  <ActionButton $w={148}>ADD ALL DEVICES</ActionButton>
                </MarketActions>
              </MarketPanel>
              <Controls>
                <Control $gap={4}>
                  Display
                  <Select>
                    14
                    <Stepper>
                      <svg width="9" height="12" viewBox="0 0 9 12" fill="none" stroke="#fff" strokeWidth="1.2">
                        <path d="M1.8 4.5L4.5 1.8 7.2 4.5M1.8 7.5L4.5 10.2 7.2 7.5" />
                      </svg>
                    </Stepper>
                  </Select>
                  records per page
                </Control>
                <Control $gap={6}>
                  Search:
                  <SearchInput />
                </Control>
              </Controls>
              <TableHead>
                <HeadCell $right={22}>
                  Techname
                  <Sort on />
                </HeadCell>
                <HeadCell $right={20} $track={0.22}>
                  SiteID/Switch
                  <Sort />
                </HeadCell>
                <HeadCell $right={20} $track={0.12}>
                  SiteName
                  <Sort />
                </HeadCell>
                <HeadCell $right={21}>
                  <span>
                    Device
                    <br />
                    Name
                  </span>
                  <Sort />
                </HeadCell>
                <HeadCell $track={0.15}>IP address</HeadCell>
              </TableHead>
            </MapArea>
          </Columns>
        </Content>
        <Gutter />
      </Page>
    </>
  );
}
